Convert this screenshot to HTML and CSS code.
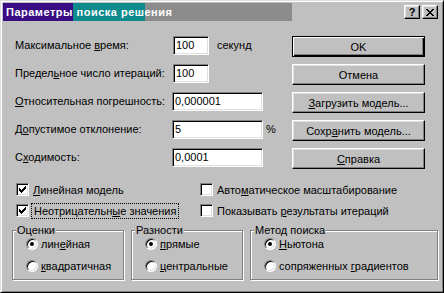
FILE: index.html
```html
<!DOCTYPE html>
<html lang="ru">
<head>
  <meta charset="UTF-8">
  <title>Параметры поиска решения</title>
  <link rel="stylesheet" href="styles.css">
</head>
<body>

  <div class="window">
    <div class="titlebar">
      <span class="title">Параметры поиска решения</span>
      <div class="title-buttons">
        <button class="tbtn">?</button>
        <button class="tbtn close">
          <svg width="8" height="7" viewBox="0 0 8 7"><path d="M0 0h2v1h1v1h2v-1h1v-1h2v1h-1v1h-1v1h-1v1h1v1h1v1h1v1h-2v-1h-1v-1h-2v1h-1v1h-2v-1h1v-1h1v-1h1v-1h-1v-1h-1v-1h-1z" fill="#000"/></svg>
        </button>
      </div>
    </div>

    <div class="top">
      <div class="fields">
        <div class="row">
          <label>Максимальное <u>в</u>ремя:</label>
          <input class="edit short" value="100">
          <span class="unit">секунд</span>
        </div>
        <div class="row">
          <label>Предел<u>ь</u>ное число итераций:</label>
          <input class="edit short" value="100">
        </div>
        <div class="row">
          <label><u>О</u>тносительная погрешность:</label>
          <input class="edit" value="0,000001">
        </div>
        <div class="row">
          <label>Д<u>о</u>пустимое отклонение:</label>
          <input class="edit" value="5">
          <span class="unit pct">%</span>
        </div>
        <div class="row">
          <label>С<u>х</u>одимость:</label>
          <input class="edit" value="0,0001">
        </div>
      </div>

      <div class="buttons">
        <button class="btn default">OK</button>
        <button class="btn">Отмена</button>
        <button class="btn"><u>З</u>агрузить модель...</button>
        <button class="btn">Сохр<u>а</u>нить модель...</button>
        <button class="btn"><u>С</u>правка</button>
      </div>
    </div>

    <div class="checks">
      <div class="check"><span class="box checked"></span><span><u>Л</u>инейная модель</span></div>
      <div class="check"><span class="box"></span><span>Авто<u>м</u>атическое масштабирование</span></div>
      <div class="check"><span class="box checked"></span><span class="focus">Неотрицательн<u>ы</u>е значения</span></div>
      <div class="check"><span class="box"></span><span>Показывать <u>р</u>езультаты итераций</span></div>
    </div>

    <div class="groups">
      <fieldset class="group">
        <legend>Оценки</legend>
        <div class="opt"><span class="radio on"></span><span>лин<u>е</u>йная</span></div>
        <div class="opt"><span class="radio"></span><span><u>к</u>вадратичная</span></div>
      </fieldset>
      <fieldset class="group">
        <legend>Разности</legend>
        <div class="opt"><span class="radio on"></span><span><u>п</u>рямые</span></div>
        <div class="opt"><span class="radio"></span><span><u>ц</u>ентральные</span></div>
      </fieldset>
      <fieldset class="group wide">
        <legend>Метод поиска</legend>
        <div class="opt"><span class="radio on"></span><span><u>Н</u>ьютона</span></div>
        <div class="opt"><span class="radio"></span><span>сопряженных <u>г</u>радиентов</span></div>
      </fieldset>
    </div>
  </div>

</body>
</html>
```

FILE: styles.css
```css
* {
  box-sizing: border-box;
}
body {
  margin: 0;
  background: #c0c0c0;
  font-family: "Liberation Sans", Arial, sans-serif;
  font-size: 11px;
  color: #000;
}
.window {
  width: 444px;
  height: 293px;
  background: #c0c0c0;
  border: 1px solid;
  border-color: #dfdfdf #000 #000 #dfdfdf;
  box-shadow: inset 1px 1px #fff, inset -1px -1px #808080;
  padding: 2px;
}
.titlebar {
  height: 18px;
  display: flex;
  align-items: center;
  justify-content: space-between;
  background: linear-gradient(to right, #3a0c84 0 70px, #0c8a8c 70px 142px, #8c8c8c 142px 289px, transparent 289px);
}
.title {
  color: #fff;
  font-weight: bold;
  letter-spacing: 0.5px;
  padding-left: 3px;
}
.title-buttons {
  display: flex;
  gap: 2px;
  margin-right: 3px;
}
.tbtn {
  width: 16px;
  height: 14px;
  padding: 0;
  background: #c0c0c0;
  border: 1px solid;
  border-color: #fff #000 #000 #fff;
  box-shadow: inset -1px -1px #808080, inset 1px 1px #dfdfdf;
  font-family: "Liberation Sans", Arial, sans-serif;
  font-weight: bold;
  font-size: 11px;
  line-height: 11px;
  display: flex;
  align-items: center;
  justify-content: center;
}

.top {
  display: flex;
  padding: 10px 0 0 12px;
}
.fields {
  width: 277px;
}
.row {
  display: flex;
  align-items: center;
  height: 28px;
}
.row label {
  width: 157px;
}
.edit {
  width: 91px;
  height: 19px;
  padding: 0 2px;
  background: #fff;
  border: 1px solid;
  border-color: #808080 #fff #fff #808080;
  box-shadow: inset 1px 1px #000, inset -1px -1px #dfdfdf;
  font-family: "Liberation Sans", Arial, sans-serif;
  font-size: 11px;
  color: #000;
}
.edit.short {
  width: 36px;
  margin-left: 1px;
}
.unit {
  margin-left: 8px;
}
.unit.pct {
  margin-left: 3px;
}
.buttons {
  display: flex;
  flex-direction: column;
  gap: 7px;
  padding-top: 5px;
}
.btn {
  width: 133px;
  height: 21px;
  padding: 0;
  background: #c0c0c0;
  border: 1px solid;
  border-color: #fff #000 #000 #fff;
  box-shadow: inset -1px -1px #808080, inset 1px 1px #dfdfdf;
  font-family: "Liberation Sans", Arial, sans-serif;
  font-size: 11px;
  color: #000;
}
.btn.default {
  border-color: #000;
  box-shadow: inset 1px 1px #fff, inset -1px -1px #000, inset -2px -2px #808080;
}

.checks {
  display: grid;
  grid-template-columns: 184px 1fr;
  grid-auto-rows: 21px;
  margin-top: 8px;
  padding-left: 13px;
}
.check {
  display: flex;
  align-items: center;
  gap: 4px;
}
.box {
  width: 13px;
  height: 13px;
  flex: none;
  background: #fff;
  border: 1px solid;
  border-color: #808080 #fff #fff #808080;
  box-shadow: inset 1px 1px #000, inset -1px -1px #dfdfdf;
}
.box.checked {
  background: #fff url("data:image/svg+xml;utf8,<svg xmlns='http://www.w3.org/2000/svg' width='7' height='7'><path d='M0 2h1v1h1v1h1v-1h1v-1h1v-1h1v-1h1v3h-1v1h-1v1h-1v1h-1v1h-1v-1h-1v-1h-1z' fill='black'/></svg>") no-repeat 2px 2px;
}
.focus {
  outline: 1px dotted #000;
  outline-offset: 1px;
  padding: 0 1px;
}

.groups {
  display: flex;
  gap: 7px;
  margin-top: 3px;
  padding-left: 9px;
}
.group {
  width: 112px;
  height: 56px;
  margin: 0;
  padding: 0 0 0 13px;
  border: 1px solid #808080;
  box-shadow: inset 1px 1px #fff, 1px 1px #fff;
}
.group.wide {
  width: 188px;
}
.group legend {
  padding: 0 1px;
  margin-left: -10px;
  background: #c0c0c0;
}
.opt {
  display: flex;
  align-items: center;
  gap: 3px;
  height: 22px;
}
.group legend + .opt {
  margin-top: -3px;
}
.radio {
  width: 12px;
  height: 12px;
  flex: none;
  border-radius: 50%;
  background: #fff;
  border: 1px solid;
  border-color: #808080 #fff #fff #808080;
  box-shadow: inset 1px 1px #000, inset -1px -1px #dfdfdf;
  display: flex;
  align-items: center;
  justify-content: center;
}
.radio.on::after {
  content: "";
  width: 4px;
  height: 4px;
  border-radius: 50%;
  background: #000;
}
```
